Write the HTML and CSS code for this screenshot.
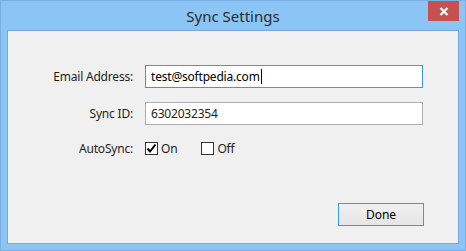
FILE: index.html
```html
<!DOCTYPE html>
<html lang="en">
<head>
  <meta charset="UTF-8" />
  <title>Sync Settings</title>
  <link rel="stylesheet" href="styles.css">
</head>
<body>

<div class="window">
  <div class="titlebar">
    <span class="title">Sync Settings</span>
    <button class="close">
      <svg width="10" height="9" viewBox="0 0 10 9"><path d="M1.5 1 L8.5 8 M8.5 1 L1.5 8" stroke="#fff" stroke-width="2.2"/></svg>
    </button>
  </div>

  <div class="client">
    <div class="form">
      <label>Email Address:</label>
      <div class="input focus">test@softpedia.com<span class="caret"></span></div>

      <label>Sync ID:</label>
      <div class="input readonly">6302032354</div>

      <label>AutoSync:</label>
      <div class="checks">
        <span class="check">
          <span class="box"><svg width="11" height="11" viewBox="0 0 11 11"><path d="M1.5 5.5 L4 8.5 L9.5 1.5" fill="none" stroke="#000" stroke-width="2"/></svg></span>
          On
        </span>
        <span class="check">
          <span class="box"></span>
          Off
        </span>
      </div>
    </div>

    <div class="footer">
      <button class="done">Done</button>
    </div>
  </div>
</div>

</body>
</html>
```

FILE: styles.css
```css
body { margin: 0; font-family: 'Noto Sans', 'Open Sans', sans-serif; }
.window { width: 466px; height: 251px; box-sizing: border-box; background: #8bc5f6; border: 1px solid #78aee2; display: flex; flex-direction: column; }
.titlebar { position: relative; height: 29px; display: flex; align-items: center; justify-content: center; }
.title { font-size: 15px; color: #2b2b2b; margin-top: 1px; }
.close { position: absolute; top: 0; right: 6px; width: 31px; height: 20px; border: none; background: #c75050; padding: 0; display: flex; align-items: center; justify-content: center; }
.client { flex: 1; margin: 0 6px 6px; background: #f0f0f0; border: 1px solid #75a9de; display: flex; flex-direction: column; }
.form { display: grid; grid-template-columns: 125px 278px; column-gap: 12px; row-gap: 14px; align-items: center; padding-top: 34px; font-size: 12px; letter-spacing: -0.2px; color: #1e1e1e; }
.form label { text-align: right; }
.input { height: 23px; box-sizing: border-box; background: #fff; padding: 0 5px; display: flex; align-items: center; font-size: 12px; color: #000; }
.input.focus { border: 1px solid #3c97e8; }
.input.readonly { border: 1px solid #adadad; color: #222; }
.caret { width: 1px; height: 15px; background: #000; margin-left: 1px; }
.checks { display: flex; gap: 24px; margin-top: 1px; }
.check { display: flex; align-items: center; gap: 3px; }
.box { width: 13px; height: 13px; box-sizing: border-box; border: 1px solid #333; background: #fff; display: flex; align-items: center; justify-content: center; }
.footer { margin-top: auto; display: flex; justify-content: flex-end; padding: 0 34px 17px 0; }
.done { width: 86px; height: 23px; border: 1px solid #3399ff; background: linear-gradient(#f0f0f0, #e5e5e5); font-family: inherit; font-size: 12px; color: #000; padding: 0; }
```
